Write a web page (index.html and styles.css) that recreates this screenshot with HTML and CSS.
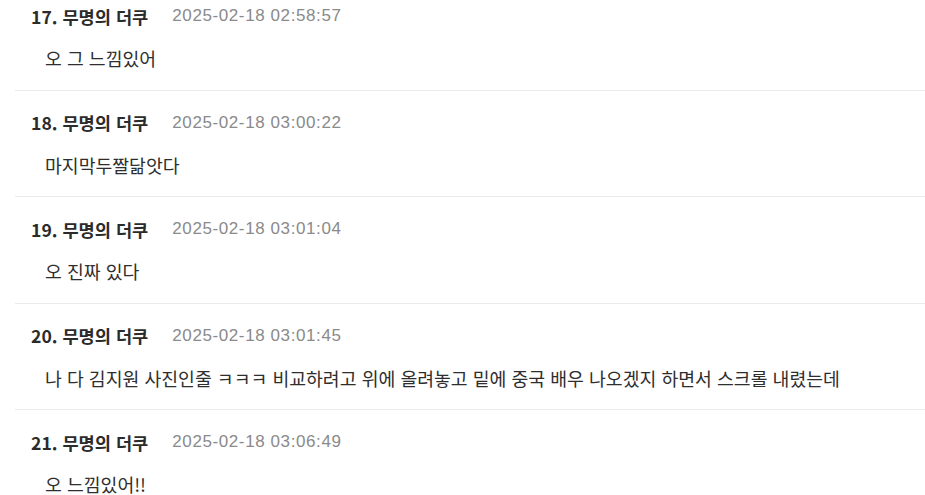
FILE: index.html
```html
<!DOCTYPE html>
<html lang="ko">

<head>
    <meta charset="UTF-8" />
    <meta name="viewport" content="width=device-width, initial-scale=1.0" />
    <title>댓글</title>
    <link rel="stylesheet" href="styles.css">
</head>

<body>
    <ul class="comment-list">
        <li class="comment">
            <div class="comment-head">
                <span class="comment-name">17. 무명의 더쿠</span>
                <span class="comment-date">2025-02-18 02:58:57</span>
            </div>
            <p class="comment-text">오 그 느낌있어</p>
        </li>
        <li class="comment">
            <div class="comment-head">
                <span class="comment-name">18. 무명의 더쿠</span>
                <span class="comment-date">2025-02-18 03:00:22</span>
            </div>
            <p class="comment-text">마지막두짤닮앗다</p>
        </li>
        <li class="comment">
            <div class="comment-head">
                <span class="comment-name">19. 무명의 더쿠</span>
                <span class="comment-date">2025-02-18 03:01:04</span>
            </div>
            <p class="comment-text">오 진짜 있다</p>
        </li>
        <li class="comment">
            <div class="comment-head">
                <span class="comment-name">20. 무명의 더쿠</span>
                <span class="comment-date">2025-02-18 03:01:45</span>
            </div>
            <p class="comment-text">나 다 김지원 사진인줄 ㅋㅋㅋ 비교하려고 위에 올려놓고 밑에 중국 배우 나오겠지 하면서 스크롤 내렸는데</p>
        </li>
        <li class="comment">
            <div class="comment-head">
                <span class="comment-name">21. 무명의 더쿠</span>
                <span class="comment-date">2025-02-18 03:06:49</span>
            </div>
            <p class="comment-text">오 느낌있어!!</p>
        </li>
    </ul>
</body>

</html>
```

FILE: styles.css
```css
body {
    margin: 0;
    background-color: #fff;
    font-family: "Noto Sans CJK KR", "Noto Sans", sans-serif;
    color: #333;
    overflow: hidden;
}

.comment-list {
    list-style: none;
    margin: -16px 0 0 15px;
    padding: 0;
}

.comment {
    padding: 20px 0 18.5px 16px;
    border-bottom: 1px solid #ebebeb;
}

.comment-head {
    display: flex;
    align-items: center;
    gap: 24px;
    height: 24px;
}

.comment-name {
    font-size: 17.6px;
    font-weight: bold;
    color: #2b2b2b;
}

.comment-date {
    font-family: "Liberation Sans", Arial, sans-serif;
    font-size: 17px;
    letter-spacing: 0.6px;
    color: #8a8a8a;
}

.comment-text {
    margin: 19px 0 0 14px;
    height: 24px;
    line-height: 22px;
    font-size: 18.3px;
    color: #2e2e2e;
}
```
